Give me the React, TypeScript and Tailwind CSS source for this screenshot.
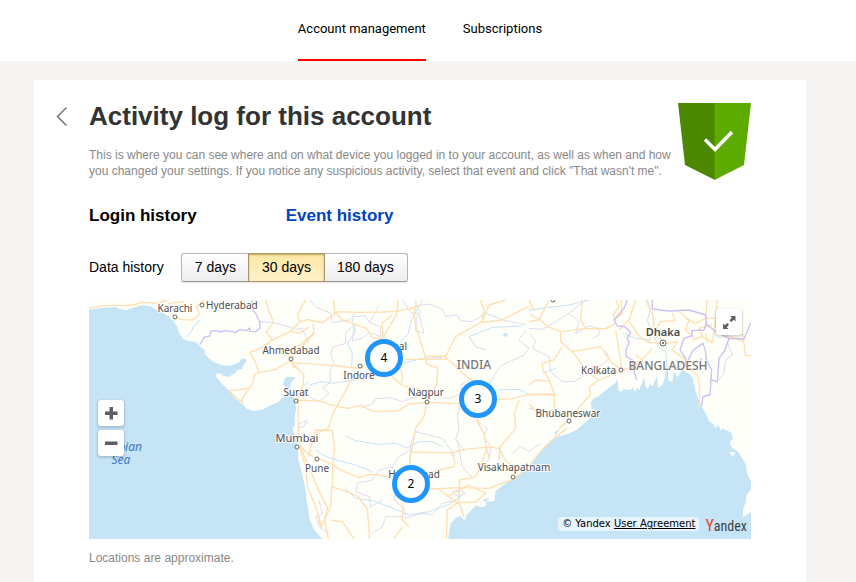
import { useState } from "react";

const MAP_W = 662;
const MAP_H = 239;

const PERIODS = ["7 days", "30 days", "180 days"];

const CLUSTERS = [
  { x: 295, y: 58, count: 4 },
  { x: 389, y: 99, count: 3 },
  { x: 322, y: 184, count: 2 },
];

type City = {
  name: string;
  x: number;
  y: number;
  dot?: [number, number];
  anchor?: "start" | "middle" | "end";
};

const CITIES: City[] = [
  { name: "Karachi", x: 86, y: 12, dot: [86, 17] },
  { name: "Hyderabad", x: 117, y: 9, dot: [113, 5], anchor: "start" },
  { name: "Ahmedabad", x: 202, y: 54, dot: [202, 59] },
  { name: "Surat", x: 207, y: 96, dot: [207, 101] },
  { name: "Mumbai", x: 208, y: 142, dot: [208, 147] },
  { name: "Pune", x: 228, y: 172, dot: [228, 159] },
  { name: "Indore", x: 270, y: 79, dot: [271, 66] },
  { name: "Bhopal", x: 318, y: 50, anchor: "end" },
  { name: "Nagpur", x: 337, y: 96, dot: [338, 102] },
  { name: "Hyderabad", x: 325, y: 178 },
  { name: "Visakhapatnam", x: 425, y: 171, dot: [424, 177] },
  { name: "Bhubaneswar", x: 479, y: 117, dot: [480, 121] },
  { name: "Kolkata", x: 527, y: 74, dot: [532, 70], anchor: "end" },
];

// Line work below is drawn on a grid three times finer than the map units.
const LAND = [
  "M0 0V29L30 25 55 22 80 22 95 27 112 31 130 23 160 16 185 19 205 31 222 39 238 48 251 61 262 75 270 98 282 117 300 124 320 126 334 140 346 148 348 163 360 175 375 187 400 196 425 197 450 187 458 175 472 178 470 188 461 198 462 206 446 209 437 220 420 230 405 229 397 221 384 220 379 228 400 252 420 272 440 296 460 313 474 326 492 333 520 329 545 316 568 307 586 287 594 265 583 255 584 241 592 230 620 232 608 245 603 260 613 280 617 304 622 325 617 350 618 376 610 386 617 405 624 430 627 452 628 482 635 505 642 534 650 568 652 597 658 630 662 660 676 690 700 717H1078L1081 690 1087 668 1100 654 1115 648 1121 658 1127 661 1133 646 1148 630 1160 617 1183 622 1193 616 1190 606 1216 603 1220 574 1240 557 1262 543 1282 527 1320 507 1332 486 1350 459 1362 446 1382 426 1405 410 1438 401 1461 391 1478 377 1500 357 1520 344 1519 329 1508 326 1505 308 1513 296 1530 287 1556 266 1578 250 1586 238 1588 270 1595 275 1605 268 1625 271 1631 260 1637 277 1645 262 1650 272 1659 249 1666 234 1669 258 1676 267 1683 253 1691 259 1704 229 1707 263 1720 256 1728 232 1730 211 1737 214 1738 242 1750 245 1754 222 1758 217 1765 232 1774 219 1780 208 1790 216 1800 221 1811 235 1816 260 1825 290 1838 320 1850 340 1860 362 1872 371 1881 384 1890 374 1894 392 1900 385 1925 397 1932 413 1922 428 1930 444 1948 456 1960 476 1970 492 1974 520 1986 544V0Z",
  "M1986 568L1972 587 1971 605 1963 625 1961 650 1970 648 1986 635Z",
  "M1921 456L1938 456 1935 468 1925 465Z",
];

const ROADS = [
  "M0 25L38 17 100 17 135 15 158 7 205 10 235 0",
  "M256 47L275 58 312 60 332 42 322 20 345 0",
  "M256 47L235 30 240 10 285 5",
  "M530 0L540 34 554 67 531 97 548 116 545 124 508 148 481 158 497 180 509 218 495 225 493 246 478 270 458 299 460 313",
  "M548 121L604 94 632 65 660 58M632 65L625 44 650 0M604 94L630 100 660 82",
  "M509 218L560 208 604 183 595 155 640 130 675 98M604 183L630 210 645 225 641 260 628 298 627 360 629 410M609 183L612 200 630 207M420 272L480 266M420 272L458 307",
  "M604 183L612 188 700 194 750 198",
  "M604 176L623 158 675 100 672 70M660 60L700 68 737 43 735 0",
  "M737 35L812 37 880 36 925 34 982 21 980 0M737 35L760 60 790 70 832 85 850 112 880 116 M880 116L922 45 928 0M910 45L880 68 882 115",
  "M982 16L975 40 979 72 990 108 1012 180 1012 190 1032 200 1047 205 1043 253 1029 280 1012 307",
  "M750 198L812 206 825 200 M825 240L790 235 752 305 732 340 718 384 680 400",
  "M905 225L940 257 1012 273M935 205L940 230 938 256M950 178L1008 178 1010 169 1070 168 1072 177 1012 178M1070 172L1090 190 1120 218 1155 247",
  "M1070 168L1100 110 1175 67 1240 60 1320 18M1180 63L1185 30 1175 0M1180 64L1200 15 1250 0",
  "M627 302L692 302 726 315 775 325 815 316 850 333 883 335 929 332 960 312 1012 307 1030 308 1110 311",
  "M1012 307L1005 350 980 384 964 470 962 495",
  "M1225 299L1270 296 1320 283 1400 285M1290 300L1276 340 1280 384 1268 400 1233 440 1230 480M1165 357L1171 374",
  "M629 410L635 440 648 475 660 500 688 569 716 625 707 655 718 717",
  "M635 440L660 464 688 475 727 492 757 511 810 533 845 523 900 530",
  "M660 470L670 417 680 390 730 392 737 445 732 485 729 560 780 577 808 590 835 627 842 717M729 560L725 620 697 680 690 650 M725 660L760 665 795 717M632 440L650 500 655 560 680 620 695 680",
  "M942 610L940 660 960 680M940 680L915 717M964 456L1040 458 1090 458 1125 448 1190 442 1200 470",
  "M970 535L1050 510 1095 500 1098 485 1088 460M1020 567L1112 563 1200 565 1280 535 1320 497 1362 446 1400 410 1435 385",
  "M1050 568L1080 590 1113 615 1125 650M1112 540L1160 530 1185 470 1195 442M1112 540L1110 605 1075 630 1072 717M1075 590L1140 555 1190 580 1160 606 1110 608",
  "M1165 364L1185 400 1192 440 1230 445 1250 482 1270 500",
  "M1320 42L1355 60 1375 80 1415 95 1415 125 1450 155 1535 140 1565 185 1598 210",
  "M1320 65L1350 60 1380 0M1420 95L1490 85 1550 86 1580 70 1573 45 1590 20 1580 0",
  "M1490 85L1475 60 1480 0M1420 140L1395 180 1360 190 1362 210 1380 238 1396 282 1396 330 1441 358",
  "M1320 255L1340 240 1385 245M1325 284L1396 282M1450 155L1500 220 1530 240 1560 228 1598 210 1590 150 1580 90",
  "M1441 358L1490 300 1505 284 1500 262 1530 240M1320 310L1345 340 1390 330M1441 362L1410 384",
  "M1590 90L1620 60 1640 0M1620 65L1652 110 1680 128 1695 70 1690 40 1670 0M1680 128L1724 130 1700 90 1715 65 1760 62 1750 40",
  "M1598 210L1640 200 1690 145M1640 165L1660 180 1650 205M1724 130L1765 125 1750 150 1790 180 1805 210 1825 225 1832 260 1830 320",
  "M1790 55L1820 70 1850 55 1880 55M1810 120L1840 110 1870 128 1880 60 1885 0M1840 110L1830 85 1870 75M1850 55L1855 0M1960 100L1965 130 1970 167 1986 167M1850 100L1855 128M1965 125L1925 110 1900 100",
  "M1595 0L1600 40 1575 60M1335 32L1320 0M1765 30L1800 60 1790 90 1815 115",
];

const BORDERS = [
  "M333 134L345 112 362 108 366 93 385 92 390 96 412 92 440 97 453 89 472 92 482 84 482 94 500 95 513 85 512 65 500 40 485 22 490 0",
  "M1615 0L1605 25 1575 60 1585 78 1607 80 1625 97 1615 115 1620 130 1610 150 1612 170 1630 180 1635 215 1643 240",
  "M1690 0L1690 27 1740 33 1800 30 1850 45 1852 70 1845 90 1808 92 1810 107 1785 115 1773 150 1790 175 1788 200 1812 150 1842 130 1850 155 1852 180 1868 210 1863 285 1842 290 1838 318",
  "M1850 70L1880 95 1920 115 1908 150 1890 175 1885 245 1864 238M1920 115L1965 117 1986 68",
];

const REGIONS = [
  "M513 65L555 68 575 73 620 88 640 85 650 110 660 130",
  "M660 0L680 20 725 40 730 68 780 60 790 50 830 48 842 68 875 80 875 110 840 97 820 115 790 122 795 75 770 100 770 130 730 142 725 165 735 190 722 215 725 247 700 262 720 280 690 305 660 290",
  "M870 17L842 68M940 0L965 38 990 42 1000 80 1005 98 980 94 982 55 995 35 980 18 1020 12 1060 28 1070 50 1105 44 1115 62 1150 65 1190 40 1245 60 1310 75",
  "M1310 90L1290 120 1320 145 1305 165 1240 195 1222 215 1200 255 1170 270M1150 235L1115 255 1120 290 1105 345 1110 384 1100 420 1125 448",
  "M820 322L850 312 860 296 905 293 940 305 980 290 1020 285 1080 296 1110 284",
  "M627 383L645 380 650 365 660 372M655 360L630 372",
  "M962 495L965 430 980 395 1020 405 1060 415 1100 470",
  "M962 450L925 475 910 500 870 510 850 540 805 550 800 575 840 590 845 620 880 600M910 500L925 545 915 600 945 625 950 655 1000 640 1030 645 1060 610 1105 600",
  "M945 650L890 650 880 680 850 700M1105 420L1120 500 1150 535M1160 360L1195 385 1185 410 1205 440 1200 480 1170 500M1270 460L1295 440 1320 455 1355 430",
  "M690 600L700 640 680 650 690 680 720 700M1090 575L1110 570 1130 580 1110 590 1090 580",
  "M1320 85L1360 88 1400 65 1440 40 1470 65 1460 100 1500 78 1530 85 1530 105 1510 115",
  "M1325 105L1340 125 1330 145 1380 170 1385 215 1420 245 1455 245 1480 230 1490 205 1540 195 1560 175 1550 150",
  "M1490 0L1440 40M1890 240L1905 220 1910 180 1930 165 1915 125",
];

const RIVERS = [
  "M330 60L322 76 312 80 310 90 292 112M660 255L700 245 730 250 800 240 830 230M795 40L790 65 800 95 775 130 790 160 788 200",
  "M1000 0L968 60 958 100 940 118 925 150M945 190L1000 175 1060 173",
  "M770 408L800 422 870 433 920 430 955 444 990 425 1030 425 1060 440",
  "M680 450L710 470 745 480 800 495 850 515M765 562L800 595 850 602 900 620 960 645 1020 635 1080 613 1120 585",
  "M1140 110L1210 82 1300 78M1140 110L1160 140 1190 150M1225 270L1290 268 1320 284",
  "M1675 0L1685 30 1675 60 1690 100 1710 140 1730 155 1735 210M1600 100L1640 115 1680 120M1760 180L1790 195",
  "M1320 30L1440 15 1500 0M1360 220L1400 205M1320 325L1390 340 1430 355M625 280L650 250 660 245",
];

const HALO = "fill-[#4d4d4d] stroke-white/80 stroke-2 [paint-order:stroke]";

function Strokes({ paths, className }: { paths: string[]; className: string }) {
  return (
    <g className={className} fill="none" strokeLinejoin="round">
      {paths.map((d) => (
        <path key={d} d={d} />
      ))}
    </g>
  );
}

function MapCanvas() {
  return (
    <svg
      viewBox={`0 0 ${MAP_W} ${MAP_H}`}
      className="block h-auto w-full font-['Noto_Sans','Open_Sans',sans-serif]"
      role="img"
      aria-label="Login locations"
    >
      <rect width={MAP_W} height={MAP_H} fill="#c5e4f6" />
      <g transform="scale(0.333333)">
        {LAND.map((d) => (
          <path key={d} d={d} fill="#fffff9" />
        ))}
        <path
          d="M1240 105L1250 98 1258 102 1250 112Z M1832 172L1840 178 1836 190Z M1180 600L1200 594 1192 606Z M1395 398L1415 385 1400 405Z"
          fill="#c5e4f6"
        />
        <Strokes paths={RIVERS} className="stroke-[#c5e2f6] stroke-3" />
        <Strokes paths={REGIONS} className="stroke-[#dfdaf1] stroke-3" />
        <Strokes paths={ROADS} className="stroke-[#fedfb2] stroke-4" />
        <Strokes paths={BORDERS} className="stroke-[#cbbff6] stroke-4" />
      </g>

      {CITIES.map((c) => (
        <g key={`${c.name}-${c.x}`}>
          {c.dot && (
            <circle cx={c.dot[0]} cy={c.dot[1]} r="2" fill="#fff" stroke="#666" />
          )}
          <text
            x={c.x}
            y={c.y}
            textAnchor={c.anchor ?? "middle"}
            className={HALO}
            fontSize={c.name === "Mumbai" ? 11 : 10}
          >
            {c.name}
          </text>
        </g>
      ))}

      <circle cx="464" cy="0" r="2" fill="#fff" stroke="#666" />
      <circle cx="574" cy="43" r="3" fill="#fff" stroke="#666" />
      <circle cx="574" cy="43" r="1" fill="#444" />
      <text x="574" y="36" textAnchor="middle" className={HALO} fontSize="11" fontWeight="600">
        Dhaka
      </text>
      <g fill="#777" stroke="#fff" strokeWidth="1" paintOrder="stroke" fontSize="12" fontWeight="500">
        <text x="385" y="69" textAnchor="middle">INDIA</text>
        <text x="579" y="70" textAnchor="middle">BANGLADESH</text>
      </g>
      <g fill="#3c78c3" fontSize="12" fontStyle="italic" textAnchor="middle">
        <text x="32" y="151">Arabian</text>
        <text x="32" y="164">Sea</text>
      </g>
    </svg>
  );
}

function Shield() {
  return (
    <svg width="73" height="77" viewBox="0 0 73 77" className="shrink-0" aria-hidden>
      <path d="M0 0H37V77L7 62Z" fill="#4b8700" />
      <path d="M36.500 0H73L66 62 36.500 77Z" fill="#5daa00" />
      <path d="M27 36.500L37 46.500 54 29" fill="none" stroke="#fff" strokeWidth="3.500" />
    </svg>
  );
}

const MAP_BUTTON =
  "flex size-[26px] items-center justify-center rounded-[3px] bg-white text-[#5b6066] shadow-[0_1px_2px_1px_rgba(0,0,0,0.15)]";

function LoginMap() {
  return (
    <div className="relative mt-[18px] overflow-hidden">
      <MapCanvas />

      {CLUSTERS.map((c) => (
        <button
          key={c.count}
          type="button"
          className="absolute flex size-[38px] -translate-x-1/2 -translate-y-1/2 items-center justify-center rounded-full border-[5px] border-[#2196fa] bg-white font-['Noto_Sans',sans-serif] text-[12px] text-black"
          style={{
            left: `${(c.x / MAP_W) * 100}%`,
            top: `${(c.y / MAP_H) * 100}%`,
          }}
        >
          {c.count}
        </button>
      ))}

      <div className="absolute top-[100px] left-[9px] flex flex-col gap-1">
        <button type="button" aria-label="Zoom in" className={MAP_BUTTON}>
          <svg width="14" height="14" viewBox="0 0 14 14" fill="currentColor" aria-hidden>
            <path d="M5.500 1H9V5.500H13.500V9H9V13.500H5.500V9H1V5.500H5.500Z" />
          </svg>
        </button>
        <button type="button" aria-label="Zoom out" className={MAP_BUTTON}>
          <svg width="14" height="14" viewBox="0 0 14 14" fill="currentColor" aria-hidden>
            <path d="M1 5.500H13.500V9H1Z" />
          </svg>
        </button>
      </div>

      <div className="absolute top-[9px] right-[9px]">
        <button type="button" aria-label="Full screen" className={MAP_BUTTON}>
          <svg width="14" height="14" viewBox="0 0 14 14" fill="currentColor" aria-hidden>
            <path d="M8 1H13.500V6.500L11.700 4.700 9.300 7 7.500 5.200 9.800 2.800ZM6.500 14H1V8.500L2.800 10.200 5.200 7.900 7 9.700 4.700 12.200Z" />
          </svg>
        </button>
      </div>

      <div className="absolute right-1 bottom-1 flex items-end gap-1.5">
        <p className="mb-1 rounded-[3px] bg-white/60 px-1 font-['DejaVu_Sans',sans-serif] text-[10px] leading-[14px] text-black">
          © Yandex{" "}
          <a href="#agreement" className="underline">
            User Agreement
          </a>
        </p>
        <a
          href="#yandex"
          className="font-['Roboto_Condensed','Open_Sans_Condensed',Roboto,sans-serif] text-[14px] leading-[18px] text-[#3d4449]"
        >
          <span className="text-[16px] text-[#e0452c]">Y</span>andex
        </a>
      </div>
    </div>
  );
}

export default function App() {
  const [period, setPeriod] = useState("30 days");

  return (
    <div className="flex min-h-screen flex-col bg-[#f6f5f3] font-['Liberation_Sans',Arial,sans-serif] text-black">
      <header className="bg-white pr-4">
        <nav className="flex justify-center gap-[37px] font-[Roboto,sans-serif] text-[13px] leading-[18px]">
          <a href="#account" className="border-b-2 border-[#f00] pt-5 pb-[21px]">
            Account management
          </a>
          <a href="#subscriptions" className="border-b-2 border-transparent pt-5 pb-[21px]">
            Subscriptions
          </a>
        </nav>
      </header>

      <div className="flex flex-1 flex-col pt-[19px] pr-4">
        <main className="mx-auto flex w-full max-w-[772px] flex-1 bg-white pt-5 pr-[55px] pb-4 pl-[22px]">
          <a href="#back" aria-label="Back" className="w-[33px] shrink-0 pt-[7px]">
            <svg width="12" height="19" viewBox="0 0 12 19" fill="none" aria-hidden>
              <path d="M10.500 0.500L1.500 9.500 10.500 18.500" stroke="#777" strokeWidth="1.500" />
            </svg>
          </a>

          <div className="min-w-0 flex-1">
            <div className="flex justify-between gap-1">
              <div>
                <h1 className="text-[26px] leading-8 font-bold text-[#333]">
                  Activity log for this account
                </h1>
                <p className="mt-[15px] text-[12px] leading-4 text-[#888]">
                  This is where you can see where and on what device you logged in to your account,
                  as well as when and how you changed your settings. If you notice any suspicious
                  activity, select that event and click "That wasn't me".
                </p>
              </div>
              <div className="shrink-0 pt-[3px]">
                <Shield />
              </div>
            </div>

            <div className="mt-6 flex gap-[89px] text-[17px] leading-6 font-bold">
              <h2>Login history</h2>
              <a href="#events" className="text-[#04b]">
                Event history
              </a>
            </div>

            <div className="mt-[25px] flex items-center gap-[17px] text-[14px]">
              <span id="period-label">Data history</span>
              <div
                role="group"
                aria-labelledby="period-label"
                className="flex rounded-[3px] border border-[#b5b5b5] border-b-[#9a9a9a] bg-linear-to-b from-white to-[#ededed] shadow-[0_1px_1px_rgba(0,0,0,0.1)]"
              >
                {PERIODS.map((p) => (
                  <button
                    key={p}
                    type="button"
                    aria-pressed={p === period}
                    onClick={() => setPeriod(p)}
                    className={
                      p === period
                        ? "h-[27px] bg-linear-to-b from-[#ffe8a4] to-[#fff1c8] px-[13px] shadow-[inset_0_1px_2px_rgba(120,80,0,0.45),0_0_0_1px_#a99769]"
                        : "h-[27px] px-[13px]"
                    }
                  >
                    {p}
                  </button>
                ))}
              </div>
            </div>

            <LoginMap />

            <p className="mt-[11px] text-[12px] leading-4 text-[#888]">Locations are approximate.</p>
          </div>
        </main>
      </div>
    </div>
  );
}
